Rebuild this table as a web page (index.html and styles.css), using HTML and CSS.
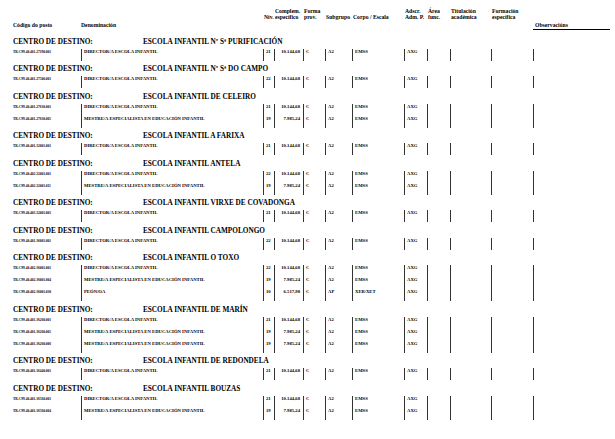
FILE: index.html
```html
<!DOCTYPE html>
<html lang="gl">
<head>
<meta charset="utf-8">
<title>Centros de destino</title>
<link rel="stylesheet" href="styles.css">
</head>
<body>
<div class="page">
  <div class="thead">
    <div class="h low">Código do posto</div>
    <div class="h low">Denominación</div>
    <div class="h mid">Nív.</div>
    <div class="h">Complem.<br>específico</div>
    <div class="h">Forma<br>prov.</div>
    <div class="h mid">Subgrupo</div>
    <div class="h mid">Corpo / Escala</div>
    <div class="h">Adscr.<br>Adm. P.</div>
    <div class="h">Área<br>func.</div>
    <div class="h">Titulación<br>académica</div>
    <div class="h">Formación<br>específica</div>
    <div class="h low obs">Observacións</div>
  </div>

  <section class="block">
    <h2 class="center"><span class="lbl">CENTRO DE DESTINO:</span><span>ESCOLA INFANTIL Nº Sª PURIFICACIÓN</span></h2>
    <div class="row"><div class="c code">TR.C99.40.401.27190.001</div><div class="c b">DIRECTOR/A ESCOLA INFANTIL</div><div class="c b">21</div><div class="c b num">10.144,68</div><div class="c b">C</div><div class="c b">A2</div><div class="c b">EMSS</div><div class="c b">AXG</div><div class="c b"></div><div class="c b"></div><div class="c b"></div><div class="c b"></div></div>
  </section>

  <section class="block">
    <h2 class="center"><span class="lbl">CENTRO DE DESTINO:</span><span>ESCOLA INFANTIL Nº Sª DO CAMPO</span></h2>
    <div class="row"><div class="c code">TR.C99.40.401.27500.001</div><div class="c b">DIRECTOR/A ESCOLA INFANTIL</div><div class="c b">22</div><div class="c b num">10.144,68</div><div class="c b">C</div><div class="c b">A2</div><div class="c b">EMSS</div><div class="c b">AXG</div><div class="c b"></div><div class="c b"></div><div class="c b"></div><div class="c b"></div></div>
  </section>

  <section class="block">
    <h2 class="center"><span class="lbl">CENTRO DE DESTINO:</span><span>ESCOLA INFANTIL DE CELEIRO</span></h2>
    <div class="row"><div class="c code">TR.C99.40.401.27630.001</div><div class="c b">DIRECTOR/A ESCOLA INFANTIL</div><div class="c b">21</div><div class="c b num">10.144,68</div><div class="c b">C</div><div class="c b">A2</div><div class="c b">EMSS</div><div class="c b">AXG</div><div class="c b"></div><div class="c b"></div><div class="c b"></div><div class="c b"></div></div>
    <div class="row"><div class="c code">TR.C99.40.401.27630.005</div><div class="c b">MESTRE/A ESPECIALISTA EN EDUCACIÓN INFANTIL</div><div class="c b">19</div><div class="c b num">7.985,24</div><div class="c b">C</div><div class="c b">A2</div><div class="c b">EMSS</div><div class="c b">AXG</div><div class="c b"></div><div class="c b"></div><div class="c b"></div><div class="c b"></div></div>
  </section>

  <section class="block">
    <h2 class="center"><span class="lbl">CENTRO DE DESTINO:</span><span>ESCOLA INFANTIL A FARIXA</span></h2>
    <div class="row"><div class="c code">TR.C99.40.401.32001.001</div><div class="c b">DIRECTOR/A ESCOLA INFANTIL</div><div class="c b">21</div><div class="c b num">10.144,68</div><div class="c b">C</div><div class="c b">A2</div><div class="c b">EMSS</div><div class="c b">AXG</div><div class="c b"></div><div class="c b"></div><div class="c b"></div><div class="c b"></div></div>
  </section>

  <section class="block">
    <h2 class="center"><span class="lbl">CENTRO DE DESTINO:</span><span>ESCOLA INFANTIL ANTELA</span></h2>
    <div class="row"><div class="c code">TR.C99.40.402.32001.001</div><div class="c b">DIRECTOR/A ESCOLA INFANTIL</div><div class="c b">22</div><div class="c b num">10.144,68</div><div class="c b">C</div><div class="c b">A2</div><div class="c b">EMSS</div><div class="c b">AXG</div><div class="c b"></div><div class="c b"></div><div class="c b"></div><div class="c b"></div></div>
    <div class="row"><div class="c code">TR.C99.40.402.32001.011</div><div class="c b">MESTRE/A ESPECIALISTA EN EDUCACIÓN INFANTIL</div><div class="c b">19</div><div class="c b num">7.985,24</div><div class="c b">C</div><div class="c b">A2</div><div class="c b">EMSS</div><div class="c b">AXG</div><div class="c b"></div><div class="c b"></div><div class="c b"></div><div class="c b"></div></div>
  </section>

  <section class="block">
    <h2 class="center"><span class="lbl">CENTRO DE DESTINO:</span><span>ESCOLA INFANTIL VIRXE DE COVADONGA</span></h2>
    <div class="row"><div class="c code">TR.C99.40.403.32001.001</div><div class="c b">DIRECTOR/A ESCOLA INFANTIL</div><div class="c b">21</div><div class="c b num">10.144,68</div><div class="c b">C</div><div class="c b">A2</div><div class="c b">EMSS</div><div class="c b">AXG</div><div class="c b"></div><div class="c b"></div><div class="c b"></div><div class="c b"></div></div>
  </section>

  <section class="block">
    <h2 class="center"><span class="lbl">CENTRO DE DESTINO:</span><span>ESCOLA INFANTIL CAMPOLONGO</span></h2>
    <div class="row"><div class="c code">TR.C99.40.401.36001.001</div><div class="c b">DIRECTOR/A ESCOLA INFANTIL</div><div class="c b">22</div><div class="c b num">10.144,68</div><div class="c b">C</div><div class="c b">A2</div><div class="c b">EMSS</div><div class="c b">AXG</div><div class="c b"></div><div class="c b"></div><div class="c b"></div><div class="c b"></div></div>
  </section>

  <section class="block">
    <h2 class="center"><span class="lbl">CENTRO DE DESTINO:</span><span>ESCOLA INFANTIL O TOXO</span></h2>
    <div class="row"><div class="c code">TR.C99.40.402.36001.001</div><div class="c b">DIRECTOR/A ESCOLA INFANTIL</div><div class="c b">22</div><div class="c b num">10.144,68</div><div class="c b">C</div><div class="c b">A2</div><div class="c b">EMSS</div><div class="c b">AXG</div><div class="c b"></div><div class="c b"></div><div class="c b"></div><div class="c b"></div></div>
    <div class="row"><div class="c code">TR.C99.40.402.36001.004</div><div class="c b">MESTRE/A ESPECIALISTA EN EDUCACIÓN INFANTIL</div><div class="c b">19</div><div class="c b num">7.985,24</div><div class="c b">C</div><div class="c b">A2</div><div class="c b">EMSS</div><div class="c b">AXG</div><div class="c b"></div><div class="c b"></div><div class="c b"></div><div class="c b"></div></div>
    <div class="row"><div class="c code">TR.C99.40.402.36001.030</div><div class="c b">PEÓN/OA</div><div class="c b">10</div><div class="c b num">6.517,98</div><div class="c b">C</div><div class="c b">AP</div><div class="c b">XEB/XET</div><div class="c b">AXG</div><div class="c b"></div><div class="c b"></div><div class="c b"></div><div class="c b"></div></div>
  </section>

  <section class="block">
    <h2 class="center"><span class="lbl">CENTRO DE DESTINO:</span><span>ESCOLA INFANTIL DE MARÍN</span></h2>
    <div class="row"><div class="c code">TR.C99.40.401.36260.001</div><div class="c b">DIRECTOR/A ESCOLA INFANTIL</div><div class="c b">21</div><div class="c b num">10.144,68</div><div class="c b">C</div><div class="c b">A2</div><div class="c b">EMSS</div><div class="c b">AXG</div><div class="c b"></div><div class="c b"></div><div class="c b"></div><div class="c b"></div></div>
    <div class="row"><div class="c code">TR.C99.40.401.36260.005</div><div class="c b">MESTRE/A ESPECIALISTA EN EDUCACIÓN INFANTIL</div><div class="c b">19</div><div class="c b num">7.985,24</div><div class="c b">C</div><div class="c b">A2</div><div class="c b">EMSS</div><div class="c b">AXG</div><div class="c b"></div><div class="c b"></div><div class="c b"></div><div class="c b"></div></div>
    <div class="row"><div class="c code">TR.C99.40.401.36260.006</div><div class="c b">MESTRE/A ESPECIALISTA EN EDUCACIÓN INFANTIL</div><div class="c b">19</div><div class="c b num">7.985,24</div><div class="c b">C</div><div class="c b">A2</div><div class="c b">EMSS</div><div class="c b">AXG</div><div class="c b"></div><div class="c b"></div><div class="c b"></div><div class="c b"></div></div>
  </section>

  <section class="block">
    <h2 class="center"><span class="lbl">CENTRO DE DESTINO:</span><span>ESCOLA INFANTIL DE REDONDELA</span></h2>
    <div class="row"><div class="c code">TR.C99.40.401.36440.001</div><div class="c b">DIRECTOR/A ESCOLA INFANTIL</div><div class="c b">21</div><div class="c b num">10.144,68</div><div class="c b">C</div><div class="c b">A2</div><div class="c b">EMSS</div><div class="c b">AXG</div><div class="c b"></div><div class="c b"></div><div class="c b"></div><div class="c b"></div></div>
  </section>

  <section class="block">
    <h2 class="center"><span class="lbl">CENTRO DE DESTINO:</span><span>ESCOLA INFANTIL BOUZAS</span></h2>
    <div class="row"><div class="c code">TR.C99.40.401.36560.001</div><div class="c b">DIRECTOR/A ESCOLA INFANTIL</div><div class="c b">21</div><div class="c b num">10.144,68</div><div class="c b">C</div><div class="c b">A2</div><div class="c b">EMSS</div><div class="c b">AXG</div><div class="c b"></div><div class="c b"></div><div class="c b"></div><div class="c b"></div></div>
    <div class="row"><div class="c code">TR.C99.40.401.36560.004</div><div class="c b">MESTRE/A ESPECIALISTA EN EDUCACIÓN INFANTIL</div><div class="c b">19</div><div class="c b num">7.985,24</div><div class="c b">C</div><div class="c b">A2</div><div class="c b">EMSS</div><div class="c b">AXG</div><div class="c b"></div><div class="c b"></div><div class="c b"></div><div class="c b"></div></div>
  </section>
</div>
</body>
</html>
```

FILE: styles.css
```css
html, body {
  margin: 0;
  padding: 0;
  background: #ffffff;
}

body {
  font-family: "Liberation Serif", "Times New Roman", serif;
  font-weight: bold;
  color: #000000;
}

.page {
  padding: 8px 0 0 13px;
}

.thead,
.row {
  display: grid;
  grid-template-columns: 68px 182px 11px 29px 22px 27px 52px 23px 23px 41px 42px 77px;
}

.thead {
  align-items: start;
  height: 22px;
}

.h {
  font-size: 5.7px;
  line-height: 6px;
  white-space: nowrap;
  padding-left: 1px;
}

.h.mid {
  padding-top: 6px;
}

.h.low {
  padding-top: 14px;
  padding-left: 0;
}

.h.obs {
  padding-left: 2px;
  padding-bottom: 1px;
  border-bottom: 1px solid #000000;
}

.block {
  margin-top: 7.5px;
}

.block + .block {
  margin-top: 4.5px;
}

.center {
  margin: 0 0 2px 0;
  display: flex;
  font-size: 7.25px;
  line-height: 9px;
  font-weight: bold;
  white-space: nowrap;
}

.lbl {
  width: 130px;
}

.row {
  height: 12px;
}

.c {
  font-size: 4.7px;
  line-height: 6px;
  white-space: nowrap;
}

.c.b {
  border-left: 1px solid #333333;
  padding-left: 2px;
}

.c.code {
  font-size: 3.5px;
}

.c.num {
  text-align: right;
  padding-right: 3px;
}
```
